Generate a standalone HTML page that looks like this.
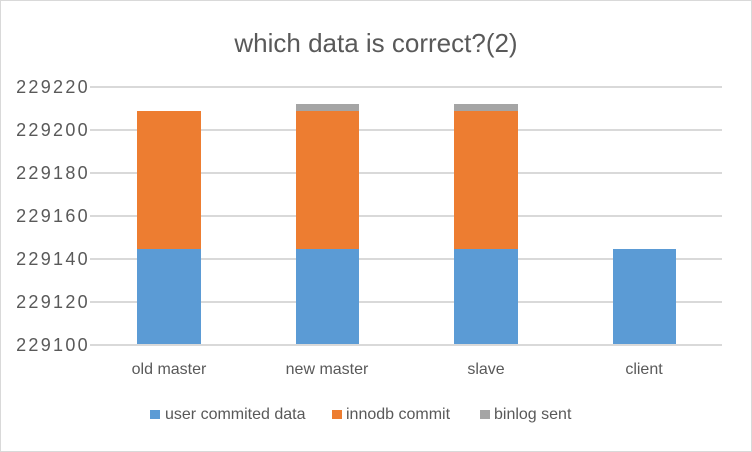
<!DOCTYPE html><html><head><style>
body{margin:0;width:752px;height:452px;background:#fff;position:relative;overflow:hidden;font-family:"Liberation Sans",sans-serif;color:#595959}
.b{position:absolute;left:0;top:0;width:750px;height:450px;border:1px solid #d9d9d9}
.t{position:absolute;left:0;width:752px;top:28px;text-align:center;font-size:26px;line-height:30px}
.g{position:absolute;left:90px;width:632px;height:2px;background:#d9d9d9}
.y{position:absolute;left:0;width:90px;text-align:right;font-size:18px;letter-spacing:2.3px;line-height:18px}
.r{position:absolute}
.c{position:absolute;width:160px;text-align:center;font-size:16px;top:361px}
.l{position:absolute;top:406px;font-size:16px}
.s{position:absolute;top:410px;width:10px;height:9px}
</style></head><body><div class="b"></div>
<div class="t">which data is correct?(2)</div>
<div class="g" style="top:86px"></div><div class="g" style="top:129px"></div><div class="g" style="top:172px"></div><div class="g" style="top:215px"></div><div class="g" style="top:258px"></div><div class="g" style="top:301px"></div><div class="g" style="top:344px"></div>
<div class="y" style="top:78px">229220</div><div class="y" style="top:121px">229200</div><div class="y" style="top:164px">229180</div><div class="y" style="top:207px">229160</div><div class="y" style="top:250px">229140</div><div class="y" style="top:293px">229120</div><div class="y" style="top:336px">229100</div>
<div class="r" style="left:137px;width:64px;top:111px;height:138px;background:#ed7d31"></div>
<div class="r" style="left:137px;width:64px;top:249px;height:95px;background:#5b9bd5"></div>
<div class="r" style="left:296px;width:63px;top:104px;height:7px;background:#a5a5a5"></div>
<div class="r" style="left:296px;width:63px;top:111px;height:138px;background:#ed7d31"></div>
<div class="r" style="left:296px;width:63px;top:249px;height:95px;background:#5b9bd5"></div>
<div class="r" style="left:454px;width:64px;top:104px;height:7px;background:#a5a5a5"></div>
<div class="r" style="left:454px;width:64px;top:111px;height:138px;background:#ed7d31"></div>
<div class="r" style="left:454px;width:64px;top:249px;height:95px;background:#5b9bd5"></div>
<div class="r" style="left:613px;width:63px;top:249px;height:95px;background:#5b9bd5"></div>
<div class="c" style="left:89px">old master</div><div class="c" style="left:247px">new master</div><div class="c" style="left:406px">slave</div><div class="c" style="left:564px">client</div>
<div class="s" style="left:150px;background:#5b9bd5"></div><div class="l" style="left:165px">user commited data</div>
<div class="s" style="left:332px;background:#ed7d31"></div><div class="l" style="left:346px">innodb commit</div>
<div class="s" style="left:480px;background:#a5a5a5"></div><div class="l" style="left:494px">binlog sent</div>
</body></html>
